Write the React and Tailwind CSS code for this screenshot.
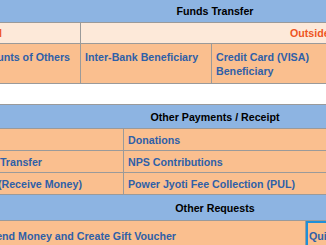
export default function App() {
  return (
    <div className="w-[326px] h-[245px] overflow-hidden bg-white font-['Liberation_Sans',Arial,sans-serif] text-[10.67px] font-bold leading-[14px] text-[#2f60a8]">
      <div className="ml-[-200px] w-[830px]">
        {/* Funds Transfer */}
        <div className="h-[23px] bg-[#8db4e2] border-b border-[#9a9a9a] flex items-center justify-center text-black">
          Funds Transfer
        </div>
        <div className="flex h-[21px] bg-[#fde9d9] border-b border-[#9a9a9a] text-[#ee5522]">
          <div className="w-[281px] border-r border-[#9a9a9a] flex items-center justify-end pr-[78px]">
            Within Bank - Internal
          </div>
          <div className="flex-1 flex items-center pl-[209px]">Outside Bank</div>
        </div>
        <div className="flex h-[40px] bg-[#fabf8f] border-b border-[#9a9a9a]">
          <div className="w-[281px] border-r border-[#9a9a9a] flex justify-end pr-[10px] pt-[6px]">
            Accounts of Others
          </div>
          <div className="w-[131px] border-r border-[#9a9a9a] pl-[4px] pt-[6px]">
            Inter-Bank Beneficiary
          </div>
          <div className="flex-1 pl-[4px] pt-[6px]">
            Credit Card (VISA)
            <br />
            Beneficiary
          </div>
        </div>

        <div className="h-[20px]" />

        {/* Other Payments / Receipt */}
        <div className="h-[25px] bg-[#8db4e2] border-y border-[#9a9a9a] flex items-center justify-center text-black">
          Other Payments / Receipt
        </div>
        <div className="flex h-[22px] bg-[#fabf8f] border-b border-[#9a9a9a]">
          <div className="w-[324px] border-r border-[#9a9a9a]" />
          <div className="flex-1 flex items-center pl-[4px]">Donations</div>
        </div>
        <div className="flex h-[22px] bg-[#fabf8f] border-b border-[#9a9a9a]">
          <div className="w-[324px] border-r border-[#9a9a9a] flex items-center justify-end pr-[81px]">
            Bulk Transfer
          </div>
          <div className="flex-1 flex items-center pl-[4px]">NPS Contributions</div>
        </div>
        <div className="flex h-[22px] bg-[#fabf8f] border-b border-[#9a9a9a]">
          <div className="w-[324px] border-r border-[#9a9a9a] flex items-center justify-end pr-[41px]">
            Collect (Receive Money)
          </div>
          <div className="flex-1 flex items-center pl-[4px]">Power Jyoti Fee Collection (PUL)</div>
        </div>

        {/* Other Requests */}
        <div className="h-[26px] bg-[#8db4e2] border-b border-[#9a9a9a] flex items-center justify-center text-black">
          Other Requests
        </div>
        <div className="flex h-[30px] bg-[#fabf8f] border-b border-[#9a9a9a]">
          <div className="w-[506px] border-r border-[#9a9a9a] flex items-center justify-end pr-[129px]">
            Send Money and Create Gift Voucher
          </div>
          <div className="flex-1 border-2 border-[#1e8fd8] flex items-center pl-[1px]">
            Quick Transfer
          </div>
        </div>
      </div>
    </div>
  );
}
